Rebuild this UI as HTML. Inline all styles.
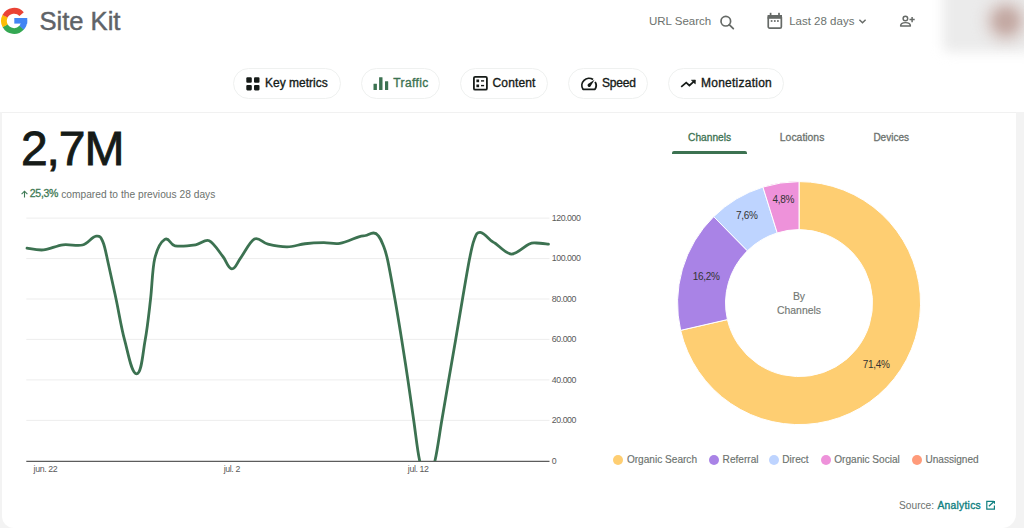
<!DOCTYPE html>
<html><head><meta charset="utf-8"><style>
html,body{margin:0;padding:0;}
body{width:1024px;height:528px;overflow:hidden;position:relative;background:#fff;font-family:"Liberation Sans",sans-serif;}
.t{position:absolute;white-space:nowrap;}
</style></head><body>
<svg style="position:absolute;left:0;top:0" width="30" height="40"><path d="M24.24 20.37 A10.15 10.15 0 0 1 21.40 27.95" fill="none" stroke="#4285F4" stroke-width="5.8"/><path d="M21.52 27.82 A10.15 10.15 0 0 1 5.14 25.67" fill="none" stroke="#34A853" stroke-width="5.8"/><path d="M5.22 25.82 A10.15 10.15 0 0 1 5.14 16.13" fill="none" stroke="#FBBC05" stroke-width="5.8"/><path d="M5.06 16.29 A10.15 10.15 0 0 1 21.64 14.11" fill="none" stroke="#EA4335" stroke-width="5.8"/><rect x="14.3" y="18.0" width="12.95" height="5.6" fill="#4285F4"/></svg>
<div class="t" style="left:39.40px;top:9.02px;font-size:25.6px;line-height:25.6px;color:#5f6368;font-weight:400;-webkit-text-stroke:0.45px #5f6368">Site Kit</div>
<div class="t" style="left:649.00px;top:15.56px;font-size:11.5px;line-height:11.5px;color:#6c726e;font-weight:400;">URL Search</div>
<svg style="position:absolute;left:718px;top:14px" width="18" height="18" viewBox="0 0 18 18"><circle cx="7.8" cy="7.2" r="4.8" fill="none" stroke="#666a67" stroke-width="1.7"/><path d="M11.2 10.7 L15.3 14.6" stroke="#666a67" stroke-width="1.8" stroke-linecap="round"/></svg>
<svg style="position:absolute;left:766px;top:12px" width="18" height="18" viewBox="0 0 18 18">
<rect x="2.25" y="3.75" width="13.1" height="12.3" rx="1.4" fill="none" stroke="#666a67" stroke-width="1.7"/>
<rect x="1.6" y="3.0" width="14.4" height="3.8" fill="#666a67"/>
<rect x="3.75" y="0.8" width="1.7" height="3" fill="#666a67"/><rect x="12.15" y="0.8" width="1.7" height="3" fill="#666a67"/>
<rect x="4.75" y="8.15" width="1.7" height="1.7" fill="#666a67"/><rect x="7.95" y="8.15" width="1.7" height="1.7" fill="#666a67"/><rect x="11.05" y="8.15" width="1.7" height="1.7" fill="#666a67"/>
</svg>
<div class="t" style="left:789.20px;top:15.66px;font-size:11.5px;line-height:11.5px;color:#6c726e;font-weight:400;">Last 28 days</div>
<svg style="position:absolute;left:857px;top:17px" width="11" height="9" viewBox="0 0 11 9"><path d="M2.4 2.7 L5.5 5.8 L8.6 2.7" fill="none" stroke="#666a67" stroke-width="1.4"/></svg>
<svg style="position:absolute;left:898px;top:13px" width="20" height="16" viewBox="0 0 20 16">
<circle cx="7.4" cy="5.5" r="2.3" fill="none" stroke="#666a67" stroke-width="1.45"/>
<path d="M2.6 13 C2.6 10.4 5 9.6 7.5 9.6 C10 9.6 12.4 10.4 12.4 13 Z" fill="none" stroke="#666a67" stroke-width="1.45" stroke-linejoin="round"/>
<path d="M14.1 4 V9.2 M11.5 6.6 H16.7" stroke="#666a67" stroke-width="1.5"/>
</svg>
<div style="position:absolute;left:943px;top:-20px;width:95px;height:72px;background:#ebebeb;border-radius:6px;filter:blur(6px)"></div>
<div style="position:absolute;left:986px;top:1px;width:40px;height:40px;background:#d4c3bf;border-radius:50%;filter:blur(7px)"></div>
<div style="position:absolute;left:995px;top:10px;width:22px;height:22px;background:#c3a9a3;border-radius:50%;filter:blur(5px)"></div>
<div style="position:absolute;left:232.5px;top:68px;width:108.5px;height:31px;box-sizing:border-box;border:1px solid #eff1f0;border-radius:16px"></div>
<div style="position:absolute;left:360.6px;top:68px;width:79.7px;height:31px;box-sizing:border-box;border:1px solid #eff1f0;border-radius:16px"></div>
<div style="position:absolute;left:460.2px;top:68px;width:87.5px;height:31px;box-sizing:border-box;border:1px solid #eff1f0;border-radius:16px"></div>
<div style="position:absolute;left:568.0px;top:68px;width:80.0px;height:31px;box-sizing:border-box;border:1px solid #eff1f0;border-radius:16px"></div>
<div style="position:absolute;left:668.2px;top:68px;width:115.6px;height:31px;box-sizing:border-box;border:1px solid #eff1f0;border-radius:16px"></div>
<svg style="position:absolute;left:246px;top:77px" width="14" height="14" viewBox="0 0 14 14" fill="#161b18"><rect x="0.3" y="0.3" width="5.5" height="5.5" rx="1.1"/><rect x="8.0" y="0.3" width="5.5" height="5.5" rx="1.1"/><rect x="0.3" y="7.9" width="5.5" height="5.5" rx="1.1"/><rect x="8.0" y="7.9" width="5.5" height="5.5" rx="1.1"/></svg>
<svg style="position:absolute;left:372px;top:76px" width="18" height="15" viewBox="0 0 18 15" fill="#3c7251"><rect x="1.5" y="7.8" width="3.4" height="6.2" rx="0.3"/><rect x="7.1" y="1.2" width="3.4" height="12.8" rx="0.3"/><rect x="13" y="5.3" width="3.2" height="8.7" rx="0.3"/></svg>
<svg style="position:absolute;left:472px;top:75px" width="17" height="17" viewBox="0 0 17 17"><rect x="1.9" y="1.8" width="13" height="12.9" rx="1.3" fill="none" stroke="#161b18" stroke-width="1.8"/><rect x="4.4" y="4.5" width="2.7" height="2.7" fill="#161b18"/><rect x="4.4" y="9.5" width="2.7" height="2.7" fill="#161b18"/><rect x="9.0" y="5.2" width="3.1" height="1.4" fill="#161b18"/><rect x="9.0" y="9.9" width="3.1" height="1.4" fill="#161b18"/></svg>
<svg style="position:absolute;left:579px;top:75px" width="20" height="17" viewBox="0 0 20 17"><path d="M16.15 6.85 A7.1 7.1 0 0 1 15.94 14.3 H4.06 A7.1 7.1 0 0 1 14.07 4.58" fill="none" stroke="#161b18" stroke-width="1.8" stroke-linejoin="round"/><path d="M8.98 9.12 L15.6 4.7 L11.42 11.48 A1.7 1.7 0 0 1 8.98 9.12 Z" fill="#161b18"/></svg>
<svg style="position:absolute;left:680px;top:77px" width="17" height="12" viewBox="0 0 17 12"><path d="M1.2 9.9 L6.2 5.6 L9.4 8.5 L14 4.4" fill="none" stroke="#161b18" stroke-width="1.7"/><path d="M11.4 3.2 L15.4 3.0 L15.3 6.9 Z" fill="#161b18" stroke="#161b18" stroke-width="0.6" stroke-linejoin="round"/></svg>
<div class="t" style="left:265.00px;top:77.44px;font-size:12.0px;line-height:12.0px;color:#161b18;font-weight:400;-webkit-text-stroke:0.35px #161b18">Key metrics</div>
<div class="t" style="left:393.30px;top:77.44px;font-size:12.0px;line-height:12.0px;color:#3c7251;font-weight:400;-webkit-text-stroke:0.35px #3c7251;letter-spacing:0.4px">Traffic</div>
<div class="t" style="left:492.50px;top:77.44px;font-size:12.0px;line-height:12.0px;color:#161b18;font-weight:400;-webkit-text-stroke:0.35px #161b18;letter-spacing:0.15px">Content</div>
<div class="t" style="left:602.00px;top:77.44px;font-size:12.0px;line-height:12.0px;color:#161b18;font-weight:400;-webkit-text-stroke:0.35px #161b18;letter-spacing:-0.2px">Speed</div>
<div class="t" style="left:701.00px;top:77.44px;font-size:12.0px;line-height:12.0px;color:#161b18;font-weight:400;-webkit-text-stroke:0.35px #161b18;letter-spacing:0.25px">Monetization</div>
<div style="position:absolute;left:0;top:112px;width:1016px;height:1px;background:#f1f1f1"></div>
<div style="position:absolute;left:0;top:112px;width:2px;height:416px;background:#f3f3f3"></div>
<div style="position:absolute;left:0;top:505px;width:16px;height:23px;background:#f3f3f3"></div>
<div style="position:absolute;left:1.5px;top:490px;width:30px;height:38px;background:#fff;border-bottom-left-radius:12px"></div>
<div style="position:absolute;left:1016px;top:112px;width:8px;height:416px;background:#f3f3f3"></div>
<div style="position:absolute;left:1000px;top:512px;width:30px;height:30px;background:#f3f3f3"></div>
<div style="position:absolute;left:970px;top:492px;width:46px;height:36px;background:#fff;border-bottom-right-radius:14px"></div>
<div class="t" style="left:21.00px;top:124.56px;font-size:48px;line-height:48px;color:#161b18;font-weight:400;-webkit-text-stroke:0.9px #161b18;letter-spacing:-1.1px">2,7M</div>
<svg style="position:absolute;left:20px;top:189px" width="9" height="9" viewBox="0 0 9 9"><path d="M4.5 8.6 V2.2 M1.6 5.1 L4.5 2.2 L7.4 5.1" fill="none" stroke="#3f7a55" stroke-width="1.1"/></svg>
<div class="t" style="left:29.80px;top:188.41px;font-size:10.5px;line-height:10.5px;color:#3f7a55;font-weight:400;-webkit-text-stroke:0.3px #3f7a55;letter-spacing:-0.3px">25,3%</div>
<div class="t" style="left:61.20px;top:189.56px;font-size:10.2px;line-height:10.2px;color:#6c726e;font-weight:400;letter-spacing:0.02px">compared to the previous 28 days</div>
<svg style="position:absolute;left:0;top:0" width="1024" height="528"><line x1="26.3" y1="218.1" x2="549.5" y2="218.1" stroke="#ededed" stroke-width="1"/><line x1="26.3" y1="258.6" x2="549.5" y2="258.6" stroke="#ededed" stroke-width="1"/><line x1="26.3" y1="299.0" x2="549.5" y2="299.0" stroke="#ededed" stroke-width="1"/><line x1="26.3" y1="339.4" x2="549.5" y2="339.4" stroke="#ededed" stroke-width="1"/><line x1="26.3" y1="379.9" x2="549.5" y2="379.9" stroke="#ededed" stroke-width="1"/><line x1="26.3" y1="420.4" x2="549.5" y2="420.4" stroke="#ededed" stroke-width="1"/><line x1="26.3" y1="461.3" x2="549.5" y2="461.3" stroke="#5c5c5c" stroke-width="1.2"/><defs><clipPath id="ca"><rect x="20" y="200" width="535" height="261"/></clipPath></defs><path clip-path="url(#ca)" d="M27.00 248.10 C29.73 248.40 37.40 250.45 43.40 249.90 C49.40 249.35 56.48 245.62 63.00 244.80 C69.52 243.98 76.97 246.43 82.50 245.00 C88.03 243.57 91.76 236.83 96.20 236.20 C100.64 235.57 100.97 237.47 103.00 242.10 C105.03 246.73 106.20 254.40 108.40 264.00 C110.60 273.60 113.48 286.97 116.20 299.70 C118.92 312.43 121.30 328.05 124.70 340.40 C128.10 352.75 131.50 373.80 136.60 373.80 C141.70 373.80 142.78 352.75 145.10 340.40 C147.42 328.05 148.90 313.30 150.50 299.70 C152.10 286.10 152.32 268.85 154.70 258.80 C157.08 248.75 160.40 242.22 164.80 239.40 C169.20 236.58 169.87 244.90 175.00 245.80 C180.13 246.70 189.90 245.65 195.60 244.80 C201.30 243.95 204.65 238.75 209.20 240.70 C213.75 242.65 219.13 251.82 222.90 256.50 C226.67 261.18 227.94 268.52 231.80 268.80 C235.66 269.08 236.93 262.77 240.70 257.80 C244.47 252.83 249.85 241.27 254.40 239.00 C258.95 236.73 262.53 242.88 268.00 244.20 C273.47 245.52 281.03 246.97 287.20 246.90 C293.37 246.83 298.91 244.45 305.00 243.75 C311.09 243.05 317.95 242.76 323.75 242.70 C329.55 242.64 333.96 244.38 339.80 243.40 C345.64 242.42 354.50 238.12 358.80 236.80 C363.10 235.48 363.13 236.13 365.60 235.50 C368.07 234.87 370.81 232.89 373.60 233.00 C376.40 233.11 376.93 234.05 378.50 236.00 C380.07 237.95 381.48 240.72 383.00 244.70 C384.52 248.68 385.60 250.75 387.60 259.90 C389.60 269.05 392.63 286.18 395.00 299.60 C397.37 313.02 399.63 326.90 401.80 340.40 C403.97 353.90 406.00 367.17 408.00 380.60 C410.00 394.03 411.87 407.68 413.80 421.00 C415.73 434.32 417.35 450.33 419.60 460.50 C421.85 470.67 424.73 482.00 427.30 482.00 C429.87 482.00 432.60 470.67 435.00 460.50 C437.40 450.33 439.43 434.32 441.70 421.00 C443.97 407.68 446.28 394.10 448.60 380.60 C450.92 367.10 453.28 353.60 455.60 340.00 C457.92 326.40 460.17 312.57 462.50 299.00 C464.83 285.43 467.65 268.48 469.60 258.60 C471.55 248.72 472.42 244.07 474.20 239.70 C475.98 235.33 476.51 232.08 480.30 232.40 C484.09 232.72 489.17 239.35 491.70 241.20 C494.23 243.05 492.22 241.35 495.50 243.50 C498.78 245.65 505.85 253.98 511.40 254.10 C516.95 254.22 524.63 246.05 528.80 244.20 C532.97 242.35 533.12 243.00 536.40 243.00 C539.68 243.00 546.48 244.00 548.50 244.20" fill="none" stroke="#3c7251" stroke-width="2.8" stroke-linejoin="round" stroke-linecap="round"/></svg>
<div class="t" style="left:551.80px;top:213.85px;font-size:8.8px;line-height:8.8px;color:#5a5a5a;font-weight:400;letter-spacing:-0.45px">120.000</div>
<div class="t" style="left:551.80px;top:254.30px;font-size:8.8px;line-height:8.8px;color:#5a5a5a;font-weight:400;letter-spacing:-0.45px">100.000</div>
<div class="t" style="left:551.80px;top:294.75px;font-size:8.8px;line-height:8.8px;color:#5a5a5a;font-weight:400;letter-spacing:-0.45px">80.000</div>
<div class="t" style="left:551.80px;top:335.20px;font-size:8.8px;line-height:8.8px;color:#5a5a5a;font-weight:400;letter-spacing:-0.45px">60.000</div>
<div class="t" style="left:551.80px;top:375.65px;font-size:8.8px;line-height:8.8px;color:#5a5a5a;font-weight:400;letter-spacing:-0.45px">40.000</div>
<div class="t" style="left:551.80px;top:416.10px;font-size:8.8px;line-height:8.8px;color:#5a5a5a;font-weight:400;letter-spacing:-0.45px">20.000</div>
<div class="t" style="left:551.80px;top:456.55px;font-size:8.8px;line-height:8.8px;color:#5a5a5a;font-weight:400;letter-spacing:-0.45px">0</div>
<div class="t" style="left:-154.60px;width:400px;text-align:center;top:465.35px;font-size:8.8px;line-height:8.8px;color:#5a5a5a;font-weight:400;letter-spacing:-0.4px">jun. 22</div>
<div class="t" style="left:31.80px;width:400px;text-align:center;top:465.35px;font-size:8.8px;line-height:8.8px;color:#5a5a5a;font-weight:400;letter-spacing:-0.4px">jul. 2</div>
<div class="t" style="left:218.20px;width:400px;text-align:center;top:465.35px;font-size:8.8px;line-height:8.8px;color:#5a5a5a;font-weight:400;letter-spacing:-0.4px">jul. 12</div>
<div class="t" style="left:509.60px;width:400px;text-align:center;top:132.86px;font-size:10.2px;line-height:10.2px;color:#3c7251;font-weight:400;-webkit-text-stroke:0.3px #3c7251">Channels</div>
<div class="t" style="left:602.10px;width:400px;text-align:center;top:132.69px;font-size:10.4px;line-height:10.4px;color:#6c726e;font-weight:400;-webkit-text-stroke:0.3px #6c726e">Locations</div>
<div class="t" style="left:691.20px;width:400px;text-align:center;top:133.03px;font-size:10.0px;line-height:10.0px;color:#6c726e;font-weight:400;-webkit-text-stroke:0.3px #6c726e">Devices</div>
<div style="position:absolute;left:672px;top:151px;width:75px;height:3px;background:#3c7251;border-radius:2px 2px 0 0"></div>
<svg style="position:absolute;left:0;top:0" width="1024" height="528"><path d="M799.05 181.60 A121.5 121.5 0 1 1 680.64 330.35 L727.42 319.58 A73.5 73.5 0 1 0 799.05 229.60 Z" fill="#fece72" stroke="#fff" stroke-width="1"/><path d="M680.64 330.35 A121.5 121.5 0 0 1 713.68 216.65 L747.41 250.80 A73.5 73.5 0 0 0 727.42 319.58 Z" fill="#a983e6" stroke="#fff" stroke-width="1"/><path d="M713.68 216.65 A121.5 121.5 0 0 1 762.96 187.08 L777.22 232.92 A73.5 73.5 0 0 0 747.41 250.80 Z" fill="#bed4ff" stroke="#fff" stroke-width="1"/><path d="M762.96 187.08 A121.5 121.5 0 0 1 799.05 181.60 L799.05 229.60 A73.5 73.5 0 0 0 777.22 232.92 Z" fill="#ee92da" stroke="#fff" stroke-width="1"/></svg>
<div class="t" style="left:676.10px;width:400px;text-align:center;top:360.13px;font-size:10.0px;line-height:10.0px;color:#333;font-weight:400;letter-spacing:-0.3px">71,4%</div>
<div class="t" style="left:506.10px;width:400px;text-align:center;top:272.13px;font-size:10.0px;line-height:10.0px;color:#333;font-weight:400;letter-spacing:-0.3px">16,2%</div>
<div class="t" style="left:546.70px;width:400px;text-align:center;top:211.33px;font-size:10.0px;line-height:10.0px;color:#333;font-weight:400;letter-spacing:-0.3px">7,6%</div>
<div class="t" style="left:583.35px;width:400px;text-align:center;top:194.73px;font-size:10.0px;line-height:10.0px;color:#333;font-weight:400;letter-spacing:-0.3px">4,8%</div>
<div class="t" style="left:599.00px;width:400px;text-align:center;top:292.19px;font-size:10.4px;line-height:10.4px;color:#737874;font-weight:400;-webkit-text-stroke:0.15px #737874">By</div>
<div class="t" style="left:599.00px;width:400px;text-align:center;top:306.39px;font-size:10.4px;line-height:10.4px;color:#737874;font-weight:400;-webkit-text-stroke:0.15px #737874">Channels</div>
<div style="position:absolute;left:613.1px;top:454.7px;width:10px;height:10px;border-radius:50%;background:#fece72"></div>
<div class="t" style="left:626.90px;top:454.85px;font-size:10.1px;line-height:10.1px;color:#6c726e;font-weight:400;-webkit-text-stroke:0.15px #6c726e">Organic Search</div>
<div style="position:absolute;left:709.4px;top:454.7px;width:10px;height:10px;border-radius:50%;background:#a983e6"></div>
<div class="t" style="left:722.60px;top:454.85px;font-size:10.1px;line-height:10.1px;color:#6c726e;font-weight:400;-webkit-text-stroke:0.15px #6c726e">Referral</div>
<div style="position:absolute;left:768.9px;top:454.7px;width:10px;height:10px;border-radius:50%;background:#bed4ff"></div>
<div class="t" style="left:782.30px;top:454.85px;font-size:10.1px;line-height:10.1px;color:#6c726e;font-weight:400;-webkit-text-stroke:0.15px #6c726e">Direct</div>
<div style="position:absolute;left:821.0px;top:454.7px;width:10px;height:10px;border-radius:50%;background:#ee92da"></div>
<div class="t" style="left:834.20px;top:454.85px;font-size:10.1px;line-height:10.1px;color:#6c726e;font-weight:400;-webkit-text-stroke:0.15px #6c726e">Organic Social</div>
<div style="position:absolute;left:912.1px;top:454.7px;width:10px;height:10px;border-radius:50%;background:#ff9b7a"></div>
<div class="t" style="left:925.40px;top:454.85px;font-size:10.1px;line-height:10.1px;color:#6c726e;font-weight:400;-webkit-text-stroke:0.15px #6c726e">Unassigned</div>
<div class="t" style="left:899.00px;top:501.16px;font-size:10.2px;line-height:10.2px;color:#6c726e;font-weight:400;">Source:</div>
<div class="t" style="left:937.50px;top:501.08px;font-size:10.3px;line-height:10.3px;color:#108080;font-weight:400;-webkit-text-stroke:0.35px #108080;letter-spacing:0.25px">Analytics</div>
<svg style="position:absolute;left:985px;top:500px" width="11" height="11" viewBox="0 0 11 11"><path d="M8.8 1.4 H1.8 V9.2 H9.4 V5.6" fill="none" stroke="#108080" stroke-width="1.2"/><path d="M3.9 6.2 L8.2 2.2" fill="none" stroke="#108080" stroke-width="1.3"/><path d="M6.6 0.9 H10 V4.3 Z" fill="#108080"/></svg>
</body></html>
